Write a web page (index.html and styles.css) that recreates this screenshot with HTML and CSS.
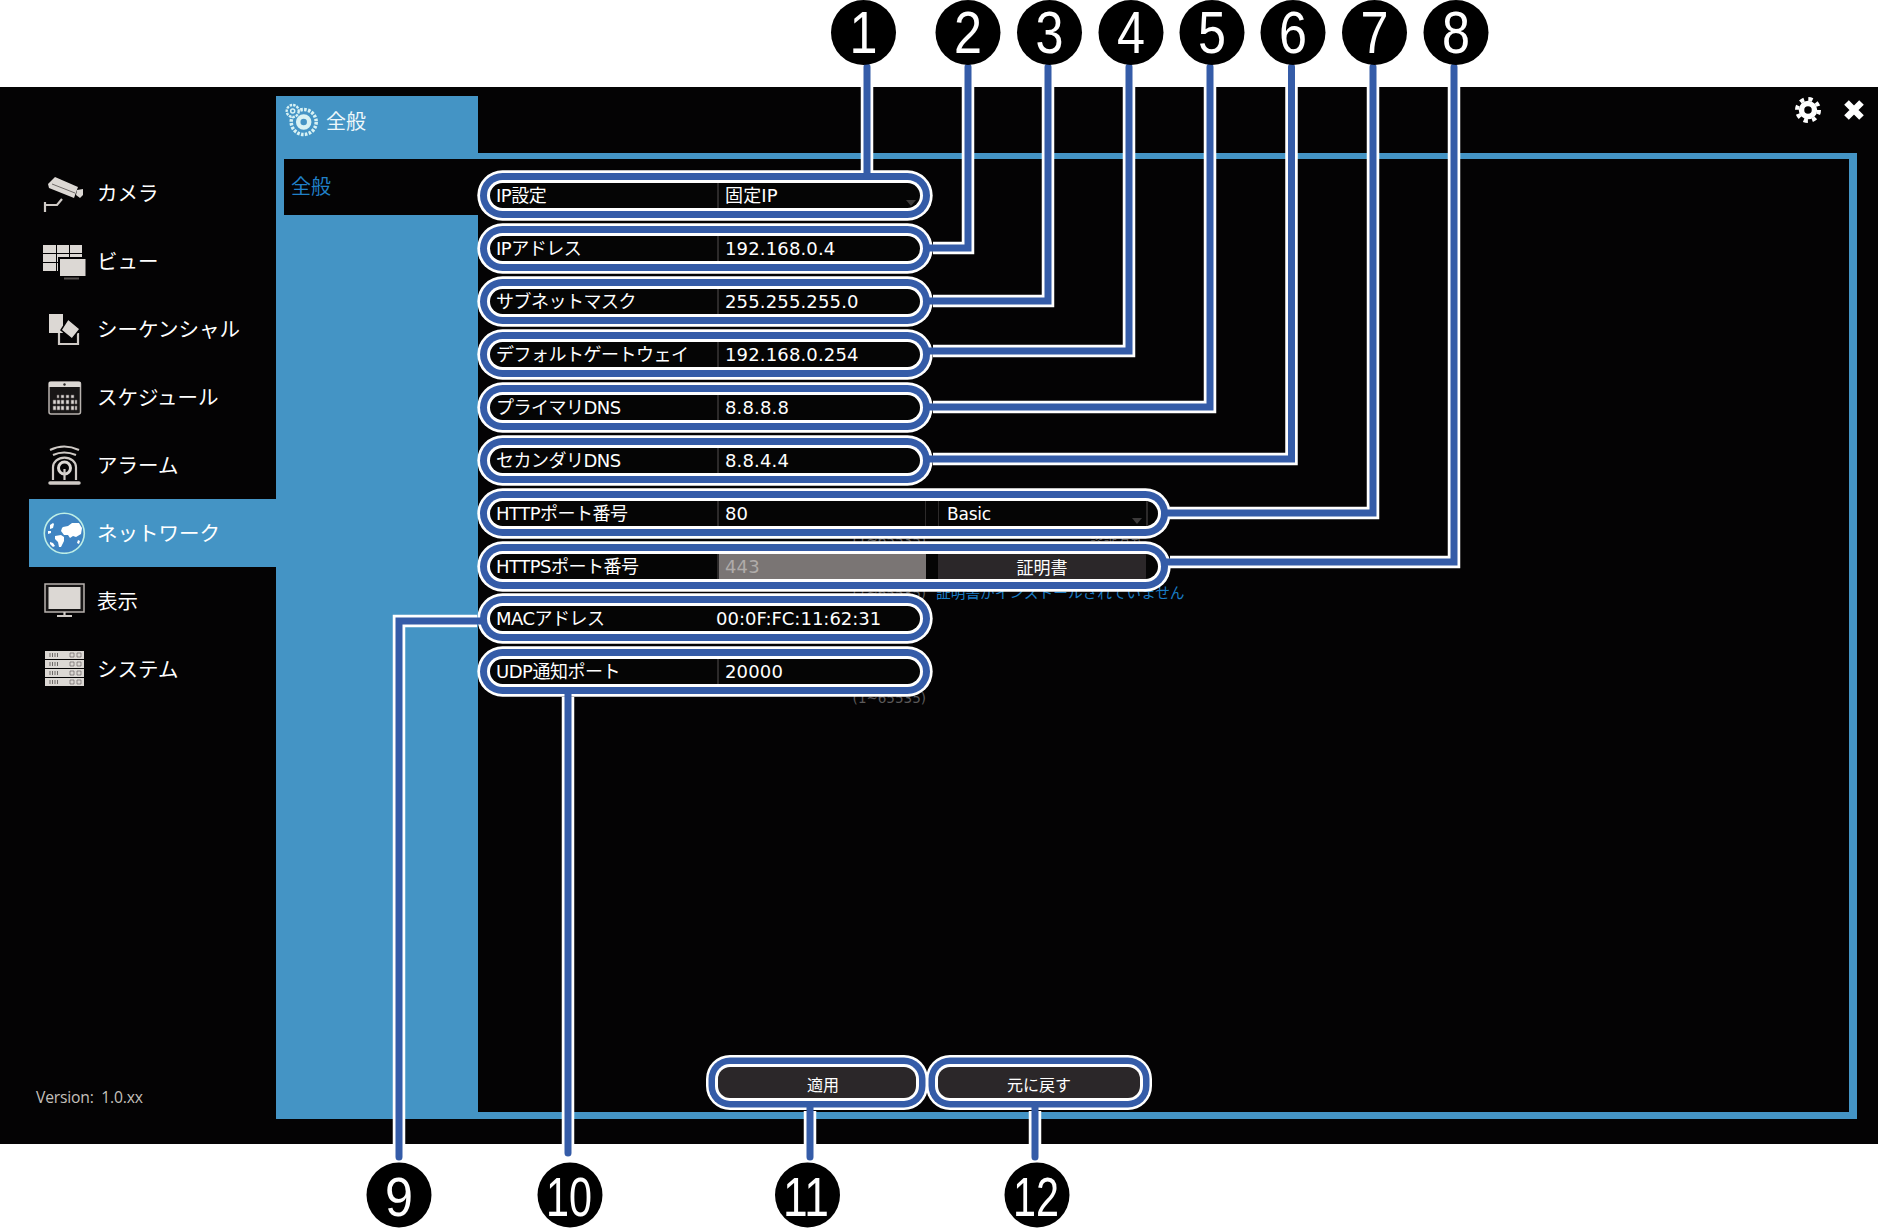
FILE: index.html
```html
<!DOCTYPE html>
<html lang="ja">
<head>
  <meta charset="UTF-8">
  <title>ネットワーク設定</title>
  <link rel="stylesheet" href="styles.css">
</head>
<body>
  <div class="panel">
    <!-- left menu -->
    <nav class="sidebar">
      <a class="menu-item">
        <svg class="menu-icon" viewBox="0 0 44 44">
          <polygon class="ic" points="6,13 13,6 36,16 32,27 7,17"/>
          <path class="ic-cut" d="M10 13l23 9"/>
          <polygon class="ic" points="35,19 41,18 41,24 38,27 34,24"/>
          <path class="ic-line" d="M3 41V31M3 34h12l5-6"/>
        </svg>
        <span>カメラ</span>
      </a>
      <a class="menu-item">
        <svg class="menu-icon" viewBox="0 0 44 44">
          <path class="ic" d="M1 6h13v8H1zM15 6h12v8H15zM28 6h12v8H28zM1 15h13v8H1zM15 15h12v8H15zM28 15h12v8H28zM1 24h13v8H1zM15 24h12v8H15zM28 24h12v8H28z"/>
          <rect class="ic-gap" x="16" y="18" width="29" height="21"/>
          <rect class="ic" x="18" y="20" width="25.500" height="17"/>
          <path class="ic-dim" d="M22 39.500h15"/>
        </svg>
        <span>ビュー</span>
      </a>
      <a class="menu-item">
        <svg class="menu-icon" viewBox="0 0 44 44">
          <rect class="ic" x="7" y="7" width="14" height="19"/>
          <path class="ic-line" d="M17 26v11h19V26"/>
          <polygon class="ic ic-edge" points="26,12 38,22 30,32 19,23"/>
        </svg>
        <span>シーケンシャル</span>
      </a>
      <a class="menu-item">
        <svg class="menu-icon" viewBox="0 0 44 44">
          <rect class="ic-box" x="7" y="7" width="31.500" height="32" rx="2"/>
          <rect class="ic" x="7" y="7" width="31.500" height="5"/>
          <circle class="ic-hole" cx="22.500" cy="9.500" r="1.200"/>
          <path class="ic-dots" d="M15 20h2v3h-2zM19 20h3v3h-3zM24 20h3v3h-3zM29 20h3v3h-3zM11 25h3v4h-3zM15 25h3v4h-3zM19 25h3v4h-3zM24 25h3v4h-3zM29 25h3v4h-3zM33 25h2v4h-2zM11 31h3v4h-3zM15 31h3v4h-3zM19 31h3v4h-3zM24 31h3v4h-3zM29 31h3v4h-3zM33 31h2v4h-2z"/>
        </svg>
        <span>スケジュール</span>
      </a>
      <a class="menu-item">
        <svg class="menu-icon" viewBox="0 0 44 44">
          <path class="ic-line" d="M8 7q14-7 29 0M11 12q11-5 23 0"/>
          <path class="ic-line" d="M11 37V24a11 9 0 0 1 23 0v13"/>
          <circle class="ic-ring" cx="22.500" cy="25" r="6"/>
          <path class="ic-line" d="M22.500 26v11"/>
          <path class="ic-heavy" d="M8 40h29"/>
        </svg>
        <span>アラーム</span>
      </a>
      <a class="menu-item active">
        <svg class="menu-icon" viewBox="0 0 44 44">
          <circle class="globe" cx="22.300" cy="23.300" r="20"/>
          <path class="land" d="M21 17l5-1 4-3 7 0 3 5-1 6-5 3-3-1-3 2-2-3-4 0-3-4 1-3z"/>
          <path class="land" d="M13 26l6-1 3 2 0 4-3 6-2 0-1-5-3-3z"/>
          <path class="land" d="M8 15l3-2 1 1-1 4-3 1zM6 21l3 0 0 2-3 1zM8 32l3 1 2 3-2 1-3-3zM36 30l2 1-1 3-2-1z"/>
        </svg>
        <span>ネットワーク</span>
      </a>
      <a class="menu-item">
        <svg class="menu-icon" viewBox="0 0 44 44">
          <rect class="ic-box" x="3" y="6" width="39" height="28"/>
          <rect class="ic" x="6.500" y="9" width="32" height="22"/>
          <path class="ic-line" d="M22.500 34v3M15 38h15"/>
        </svg>
        <span>表示</span>
      </a>
      <a class="menu-item">
        <svg class="menu-icon" viewBox="0 0 44 44">
          <g id="rack">
            <rect class="ic" x="3" y="5" width="39" height="8"/>
            <path class="ic-cut" d="M8 7v4M10.500 7v4M13 7v4M15.500 7v4"/>
            <path class="ic-dots" d="M28 7h4v4h-4zM35 7h4v4h-4z"/>
          </g>
          <use href="#rack" y="9"/>
          <use href="#rack" y="18"/>
          <use href="#rack" y="27"/>
        </svg>
        <span>システム</span>
      </a>
      <div class="version">Version:&nbsp; 1.0.xx</div>
    </nav>

    <main class="content">
      <div class="content-head">
        <div class="tab">
          <svg class="tab-icon" viewBox="0 0 36 36">
            <circle class="cog-teeth" cx="19.700" cy="20" r="12.500"/>
            <circle class="cog-body" cx="19.700" cy="20" r="5.500"/>
            <circle class="cog-small" cx="8.700" cy="9" r="6"/>
            <circle class="cog-dot" cx="8.700" cy="9" r="2"/>
          </svg>
          <span>全般</span>
        </div>
        <div class="tools">
          <svg class="tool-gear" viewBox="0 0 26 26">
            <circle class="gear-teeth" cx="13" cy="13" r="11"/>
            <circle class="gear-body" cx="13" cy="13" r="6.500"/>
          </svg>
          <svg class="tool-close" viewBox="0 0 20 20"><path d="M2.500 2.500l15 15M17.500 2.500l-15 15"/></svg>
        </div>
      </div>

      <div class="frame">
        <div class="subnav">
          <div class="subnav-item">全般</div>
        </div>
        <div class="form">
          <div class="field">
            <div class="row">
              <div class="label">IP設定</div>
              <div class="value">固定IP<i class="arrow"></i></div>
            </div>
          </div>
          <div class="field">
            <div class="row">
              <div class="label">IPアドレス</div>
              <div class="value">192.168.0.4</div>
            </div>
          </div>
          <div class="field">
            <div class="row">
              <div class="label">サブネットマスク</div>
              <div class="value">255.255.255.0</div>
            </div>
          </div>
          <div class="field">
            <div class="row">
              <div class="label">デフォルトゲートウェイ</div>
              <div class="value">192.168.0.254</div>
            </div>
          </div>
          <div class="field">
            <div class="row">
              <div class="label">プライマリDNS</div>
              <div class="value">8.8.8.8</div>
            </div>
          </div>
          <div class="field">
            <div class="row">
              <div class="label">セカンダリDNS</div>
              <div class="value">8.8.4.4</div>
            </div>
          </div>
          <div class="field">
            <div class="row row-wide">
              <div class="label">HTTPポート番号</div>
              <div class="value value-short">80</div>
              <div class="value value-select">Basic<i class="arrow"></i></div>
            </div>
            <div class="hint">
              <span>(1~65535)</span>
              <span class="hint-end">認証方式</span>
            </div>
          </div>
          <div class="field">
            <div class="row row-wide">
              <div class="label">HTTPSポート番号</div>
              <div class="value value-short value-off">443</div>
              <button class="cert">証明書</button>
            </div>
            <div class="hint">
              <span>(1~65535)</span>
              <span class="hint-blue">証明書がインストールされていません</span>
            </div>
          </div>
          <div class="field">
            <div class="row">
              <div class="label">MACアドレス</div>
              <div class="value value-plain">00:0F:FC:11:62:31</div>
            </div>
          </div>
          <div class="field">
            <div class="row">
              <div class="label">UDP通知ポート</div>
              <div class="value">20000</div>
            </div>
            <div class="hint">
              <span>(1~65535)</span>
            </div>
          </div>

          <div class="actions">
            <button class="action action-apply">適用</button>
            <button class="action action-wide">元に戻す</button>
          </div>
        </div>
      </div>
    </main>
  </div>

  <!-- numbered callouts drawn over the screen -->
  <svg class="callouts" viewBox="0 0 1878 1228">
    <g class="lead-white">
      <path d="M867 67V171"/>
      <path d="M968 67V248H933"/>
      <path d="M1048 67V301H933"/>
      <path d="M1129 67V351H933"/>
      <path d="M1210 67V407H933"/>
      <path d="M1291.500 67V459H933"/>
      <path d="M1373 67V513H1170"/>
      <path d="M1454 67V562H1170"/>
      <path d="M399 1157V621H477"/>
      <path d="M568 1153V697"/>
      <path d="M810 1157V1111"/>
      <path d="M1035 1157V1111"/>
    </g>
    <g class="lead-blue">
      <path d="M867 67V176"/>
      <path d="M968 67V248H928"/>
      <path d="M1048 67V301H928"/>
      <path d="M1129 67V351H928"/>
      <path d="M1210 67V407H928"/>
      <path d="M1291.500 67V459H928"/>
      <path d="M1373 67V513H1166"/>
      <path d="M1454 67V562H1166"/>
      <path d="M399 1157V621H483"/>
      <path d="M568 1153V692"/>
      <path d="M810 1157V1106"/>
      <path d="M1035 1157V1106"/>
    </g>
    <g class="dots">
      <circle cx="863.500" cy="32.500" r="32.500"/>
      <circle cx="968" cy="32.500" r="32.500"/>
      <circle cx="1049.500" cy="32.500" r="32.500"/>
      <circle cx="1131" cy="32.500" r="32.500"/>
      <circle cx="1212" cy="32.500" r="32.500"/>
      <circle cx="1293" cy="32.500" r="32.500"/>
      <circle cx="1374.500" cy="32.500" r="32.500"/>
      <circle cx="1456" cy="32.500" r="32.500"/>
      <circle cx="399" cy="1195" r="32.500"/>
      <circle cx="570" cy="1195" r="32.500"/>
      <circle cx="807.500" cy="1195" r="32.500"/>
      <circle cx="1037" cy="1195" r="32.500"/>
    </g>
    <g class="nums">
      <text x="863.500" y="53" textLength="28" lengthAdjust="spacingAndGlyphs">1</text>
      <text x="968" y="53" textLength="28" lengthAdjust="spacingAndGlyphs">2</text>
      <text x="1049.500" y="53" textLength="28" lengthAdjust="spacingAndGlyphs">3</text>
      <text x="1131" y="53" textLength="28" lengthAdjust="spacingAndGlyphs">4</text>
      <text x="1212" y="53" textLength="28" lengthAdjust="spacingAndGlyphs">5</text>
      <text x="1293" y="53" textLength="28" lengthAdjust="spacingAndGlyphs">6</text>
      <text x="1374.500" y="53" textLength="28" lengthAdjust="spacingAndGlyphs">7</text>
      <text x="1456" y="53" textLength="28" lengthAdjust="spacingAndGlyphs">8</text>
      <text class="num-low" x="399" y="1215.500" textLength="28" lengthAdjust="spacingAndGlyphs">9</text>
      <text class="num-low" x="569" y="1215.500" textLength="46" lengthAdjust="spacingAndGlyphs">10</text>
      <text class="num-low" x="806" y="1215.500" textLength="46" lengthAdjust="spacingAndGlyphs">11</text>
      <text class="num-low" x="1036" y="1215.500" textLength="46" lengthAdjust="spacingAndGlyphs">12</text>
    </g>
  </svg>
</body>
</html>
```

FILE: styles.css
```css
* {
  box-sizing: border-box;
}
body {
  position: relative;
  margin: 0;
  height: 1228px;
  padding-top: 87px;
  background-color: #ffffff;
  font-family: "DejaVu Sans", "Noto Sans CJK JP", sans-serif;
  color: #ffffff;
  overflow: hidden;
}
.panel {
  display: flex;
  height: 1057px;
  background-color: #040304;
}

/* left menu */
.sidebar {
  display: flex;
  flex-direction: column;
  width: 276px;
  flex-shrink: 0;
  padding: 73px 0 36px 29px;
}
.menu-item {
  display: flex;
  align-items: center;
  height: 67.9px;
  padding-left: 13px;
  gap: 11px;
  font-size: 20.500px;
  flex-shrink: 0;
}
.menu-item span {
  margin-top: -3px;
}
.menu-item.active {
  background-color: #4494c5;
}
.menu-icon {
  width: 44px;
  height: 44px;
  margin-top: -2px;
  flex-shrink: 0;
}
.ic { fill: #dcd8d4; }
.ic-edge { stroke: #040304; stroke-width: 1.5; }
.ic-cut { fill: none; stroke: #6e6a68; stroke-width: 1; }
.ic-gap { fill: #040304; }
.ic-dim { fill: none; stroke: #55514f; stroke-width: 2; }
.ic-line { fill: none; stroke: #cfcac6; stroke-width: 2.2; }
.ic-heavy { fill: none; stroke: #cfcac6; stroke-width: 3.5; stroke-linecap: round; }
.ic-box { fill: #181616; stroke: #b8b3af; stroke-width: 1.5; }
.ic-ring { fill: #040304; stroke: #dcd8d4; stroke-width: 3; }
.ic-hole { fill: #2a2827; }
.ic-dots { fill: #dcd8d4; stroke: #5a5654; stroke-width: 0.6; }
.globe { fill: #3f84c2; stroke: #bdeee6; stroke-width: 1.6; }
.land { fill: #ffffff; }
.version {
  margin-top: auto;
  margin-left: 7px;
  font-family: "Open Sans", sans-serif;
  font-size: 15.700px;
  letter-spacing: -0.2px;
  color: #c4c0bc;
}

/* right side */
.content {
  display: flex;
  flex-direction: column;
  flex: 1;
  margin: 9px 21px 25px 0;
}
.content-head {
  display: flex;
  justify-content: space-between;
  height: 57px;
  flex-shrink: 0;
}
.tab {
  display: flex;
  align-items: center;
  width: 202px;
  padding: 0 0 9px 8px;
  gap: 6px;
  background-color: #4494c5;
  font-size: 20px;
  color: #eef8fb;
}
.tab-icon {
  width: 36px;
  height: 36px;
}
.cog-teeth { fill: none; stroke: #d8f2f4; stroke-width: 3.5; stroke-dasharray: 2.6 1.33; }
.cog-body { fill: #4494c5; stroke: #d8f2f4; stroke-width: 4.500; }
.cog-small { fill: #4494c5; stroke: #d8f2f4; stroke-width: 2.400; stroke-dasharray: 2.5 1; }
.cog-dot { fill: #4494c5; stroke: #d8f2f4; stroke-width: 1.5; }
.tools {
  display: flex;
  align-items: flex-start;
  gap: 23px;
  margin-right: -7px;
  padding-top: 1px;
}
.tool-gear {
  width: 26px;
  height: 26px;
}
.gear-teeth { fill: none; stroke: #ffffff; stroke-width: 4; stroke-dasharray: 4.3 4.34; }
.gear-body { fill: #040304; stroke: #ffffff; stroke-width: 5.500; }
.tool-close {
  width: 20px;
  height: 20px;
  margin-top: 3px;
  fill: none;
  stroke: #ffffff;
  stroke-width: 6.500;
}
.frame {
  display: flex;
  flex: 1;
  border-style: solid;
  border-color: #4494c5;
  border-width: 6px 8px 7px 0;
}
.subnav {
  width: 202px;
  flex-shrink: 0;
  padding-left: 8px;
  background-color: #4494c5;
}
.subnav-item {
  height: 56px;
  padding: 12px 0 0 7px;
  background-color: #040304;
  font-size: 20px;
  color: #2080c8;
}

/* form rows */
.form {
  display: flex;
  flex-direction: column;
  flex: 1;
  padding: 24.3px 0 14px 12px;
}
.field {
  height: 52.9px;
  flex-shrink: 0;
}
.row {
  position: relative;
  z-index: 1;
  display: flex;
  align-items: center;
  width: 430px;
  height: 25px;
  border-radius: 13px;
  background-color: #050505;
  box-shadow: 0 0 0 3px #ffffff, 0 0 0 10px #355ca8, 0 0 0 12.7px #ffffff;
  font-size: 18px;
  line-height: 25px;
}
.row-wide {
  width: 668px;
}
.label {
  width: 227px;
  padding-left: 6px;
  letter-spacing: -0.5px;
  white-space: nowrap;
  flex-shrink: 0;
}
.value {
  position: relative;
  flex: 1;
  height: 25px;
  padding-left: 6px;
  border-left: 2px solid #2c2a2a;
  letter-spacing: 0.15px;
  white-space: nowrap;
}
.value-plain {
  margin-left: -1px;
  padding-left: 0;
  border-left: 0;
  letter-spacing: 0;
}
.value-short {
  flex: none;
  width: 209px;
  border-right: 1px solid #2c2a2a;
}
.value-select {
  flex: none;
  width: 210px;
  margin-left: 12px;
  padding: 1px 0 0 8px;
  border-right: 2px solid #2c2a2a;
  border-left-width: 1px;
  font-size: 17px;
  letter-spacing: -0.2px;
}
.value-off {
  background-color: #7a7574;
  color: #b0acaa;
  border-right: 0;
}
.arrow {
  position: absolute;
  right: 4px;
  bottom: 2px;
  border-style: solid;
  border-width: 6px 5px 0;
  border-color: #3c3a3a transparent transparent;
}
.cert {
  width: 208px;
  height: 25px;
  margin-left: 12px;
  padding: 0;
  border: 0;
  background-color: #2b2729;
  font-family: inherit;
  font-size: 17px;
  color: #ffffff;
}
.hint {
  display: grid;
  grid-template-columns: 436px 208px;
  column-gap: 10px;
  height: 28px;
  font-size: 13.500px;
  line-height: 28px;
  color: #5c5a5a;
  white-space: nowrap;
}
.hint span:first-child {
  text-align: right;
}
.hint-end {
  text-align: right;
}
.hint-blue {
  font-size: 14.700px;
  color: #1a7cc4;
}

/* bottom buttons */
.actions {
  position: relative;
  z-index: 1;
  display: flex;
  gap: 22px;
  margin-top: auto;
  padding-left: 228px;
}
.action {
  width: 198px;
  height: 31px;
  padding: 3px 0 0;
  border: 0;
  border-radius: 12px;
  background-color: #2b2729;
  box-shadow: 0 0 0 3px #ffffff, 0 0 0 9.5px #355ca8, 0 0 0 12px #ffffff;
  font-family: inherit;
  font-size: 16px;
  color: #ffffff;
}
.action-apply {
  padding-left: 12px;
}
.action-wide {
  width: 202px;
}

/* callouts */
.callouts {
  position: absolute;
  left: 0;
  top: 0;
  z-index: 2;
  width: 1878px;
  height: 1228px;
}
.lead-white path {
  fill: none;
  stroke: #ffffff;
  stroke-width: 12.500;
}
.lead-blue path {
  fill: none;
  stroke: #355ca8;
  stroke-width: 7;
  stroke-linecap: round;
}
.dots circle {
  fill: #000000;
}
.nums text {
  fill: #ffffff;
  font-family: "Liberation Sans", sans-serif;
  font-size: 59px;
  text-anchor: middle;
}
.nums .num-low {
  font-size: 56px;
}
```
